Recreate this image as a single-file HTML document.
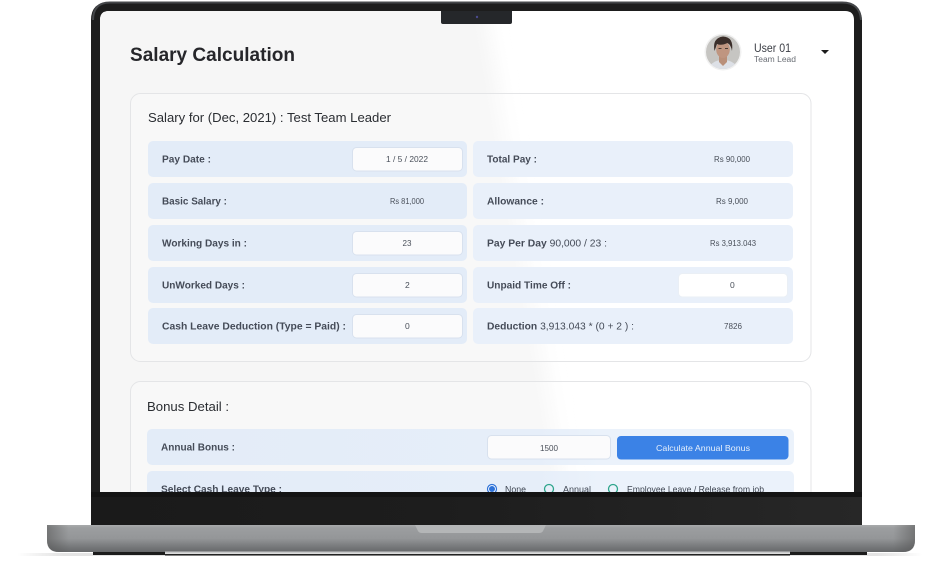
<!DOCTYPE html>
<html><head><meta charset="utf-8"><title>Salary Calculation</title>
<style>
html,body{margin:0;padding:0;background:#fff;width:940px;height:564px;overflow:hidden}
svg{display:block}
text{font-family:"Liberation Sans",sans-serif}
.l{font-size:10.5px;font-weight:700;fill:#454c58}
.n{font-weight:400}
.v{font-size:8.5px;fill:#4a505a}
.r{font-size:9px;fill:#3f4652}
</style></head>
<body>
<svg width="940" height="564" viewBox="0 0 940 564" xmlns="http://www.w3.org/2000/svg">
<defs>
<clipPath id="sc"><path d="M100 20Q100 11 109 11H845Q854 11 854 20V492H100Z"/></clipPath>
<clipPath id="av"><circle cx="723" cy="52" r="17"/></clipPath>
<linearGradient id="base" x1="0" y1="0" x2="0" y2="1">
<stop offset="0" stop-color="#a9abac"/><stop offset=".1" stop-color="#9c9ea0"/><stop offset=".5" stop-color="#949698"/><stop offset=".8" stop-color="#77797b"/><stop offset="1" stop-color="#66686a"/>
</linearGradient>
<linearGradient id="baseh" x1="0" y1="0" x2="1" y2="0">
<stop offset="0" stop-color="#555" stop-opacity=".55"/><stop offset=".025" stop-color="#555" stop-opacity="0"/><stop offset=".975" stop-color="#555" stop-opacity="0"/><stop offset="1" stop-color="#555" stop-opacity=".55"/>
</linearGradient>
<linearGradient id="sh" x1="0" y1="0" x2="1" y2="0">
<stop offset="0" stop-color="#ddd" stop-opacity="0"/><stop offset=".05" stop-color="#e4e4e4"/><stop offset=".95" stop-color="#e4e4e4"/><stop offset="1" stop-color="#ddd" stop-opacity="0"/>
</linearGradient>
<linearGradient id="bez" x1="0" y1="0" x2="1" y2="0">
<stop offset="0" stop-color="#1a1a1a"/><stop offset=".45" stop-color="#1d1d1d"/><stop offset="1" stop-color="#272727"/>
</linearGradient>
<linearGradient id="rowg" gradientUnits="userSpaceOnUse" x1="147" y1="0" x2="794" y2="0">
<stop offset="0" stop-color="#e3ecf8"/><stop offset=".6" stop-color="#e6eef9"/><stop offset=".7" stop-color="#ebf2fb"/><stop offset="1" stop-color="#ebf2fb"/>
</linearGradient>
<filter id="soft" x="-2%" y="-2%" width="104%" height="104%"><feGaussianBlur stdDeviation="0.35"/></filter>
<filter id="gl" x="-10%" y="-10%" width="120%" height="120%"><feGaussianBlur stdDeviation="9"/></filter>
</defs>

<rect x="18" y="553" width="904" height="3" fill="url(#sh)"/>
<!-- bezel -->
<path d="M91 522V20Q91 2 110 2H842Q861 2 862 20V522Q862 525 858 525H95Q91 525 91 522Z" fill="#1d1d1d"/>
<path d="M93 20Q93 2.500 110 2.500H842Q860 2.500 861 20" fill="none" stroke="#45474a" stroke-width="2"/>
<rect x="91" y="497" width="771" height="28" fill="url(#bez)"/>
<rect x="91" y="492" width="771" height="5" fill="#141414"/>

<!-- screen -->
<path d="M100 20Q100 11 109 11H845Q854 11 854 20V492H100Z" fill="#fff"/>
<g clip-path="url(#sc)">
<path d="M70 -10H482L570 510H70Z" fill="#f6f6f6" filter="url(#gl)"/>
<g filter="url(#soft)">
<text x="130" y="61" font-size="19" font-weight="700" fill="#26282c" textLength="165" lengthAdjust="spacingAndGlyphs">Salary Calculation</text>

<!-- avatar -->
<circle cx="723" cy="52" r="18.500" fill="#f1f1f1"/>
<g clip-path="url(#av)">
<rect x="706" y="35" width="34" height="34" fill="#c6c5c2"/>
<path d="M708 70Q711 62 718 60.500H728Q735 62 739 70Z" fill="#dde0e6"/>
<path d="M719 55H727V62L723 66L719 62Z" fill="#b98f79"/>
<ellipse cx="723" cy="49.500" rx="6.800" ry="8.500" fill="#bf9580"/>
<path d="M714.500 51Q712 38 723 36.500Q734 37 732 51Q731 45 727.500 43Q721 46 717 44Q716 47 714.500 51Z" fill="#3a2e29"/>
<rect x="718.500" y="48" width="3" height="1" fill="#4a3a33"/>
<rect x="725" y="48" width="3" height="1" fill="#4a3a33"/>
</g>
<text x="754" y="52" font-size="11.500" fill="#3a3d44" textLength="37" lengthAdjust="spacingAndGlyphs">User 01</text>
<text x="754" y="62" font-size="8" fill="#6a6e75" textLength="42" lengthAdjust="spacingAndGlyphs">Team Lead</text>
<path d="M821 50H829L825 54Z" fill="#1b1b1b"/>

<!-- card 1 -->
<rect x="130.500" y="93.500" width="680.500" height="268" rx="10" fill="#fff" fill-opacity=".25" stroke="#e4e5e7"/>
<text x="148" y="122" font-size="13" fill="#2b2d32" textLength="243" lengthAdjust="spacingAndGlyphs">Salary for (Dec, 2021) : Test Team Leader</text>

<g fill="#e3ecf8">
<rect x="148" y="141" width="319" height="36" rx="5"/>
<rect x="148" y="183" width="319" height="36" rx="5"/>
<rect x="148" y="225" width="319" height="36" rx="5"/>
<rect x="148" y="267" width="319" height="36" rx="5"/>
<rect x="148" y="308" width="319" height="36" rx="5"/>
</g>
<g fill="#e9f0fa">
<rect x="473" y="141" width="320" height="36" rx="5"/>
<rect x="473" y="183" width="320" height="36" rx="5"/>
<rect x="473" y="225" width="320" height="36" rx="5"/>
<rect x="473" y="267" width="320" height="36" rx="5"/>
<rect x="473" y="308" width="320" height="36" rx="5"/>
</g>

<g fill="#fbfbfc" stroke="#d8e1ee">
<rect x="352.500" y="147.500" width="110" height="23.500" rx="4"/>
<rect x="352.500" y="231.500" width="110" height="23.500" rx="4"/>
<rect x="352.500" y="273.500" width="110" height="23.500" rx="4"/>
<rect x="352.500" y="314.500" width="110" height="23.500" rx="4"/>
<rect x="678.500" y="273.500" width="109" height="23.500" rx="4" fill="#fff" stroke="#eaeff5"/>
</g>

<text class="l" x="162" y="162.500" textLength="49" lengthAdjust="spacingAndGlyphs">Pay Date :</text>
<text class="l" x="162" y="204.500" textLength="65" lengthAdjust="spacingAndGlyphs">Basic Salary :</text>
<text class="l" x="162" y="246.500" textLength="85" lengthAdjust="spacingAndGlyphs">Working Days in :</text>
<text class="l" x="162" y="288.500" textLength="83" lengthAdjust="spacingAndGlyphs">UnWorked Days :</text>
<text class="l" x="162" y="329.500" textLength="184" lengthAdjust="spacingAndGlyphs">Cash Leave Deduction (Type = Paid) :</text>
<text class="l" x="487" y="162.500" textLength="50" lengthAdjust="spacingAndGlyphs">Total Pay :</text>
<text class="l" x="487" y="204.500" textLength="57" lengthAdjust="spacingAndGlyphs">Allowance :</text>
<text class="l" x="487" y="246.500" textLength="120" lengthAdjust="spacingAndGlyphs">Pay Per Day <tspan class="n">90,000 / 23 :</tspan></text>
<text class="l" x="487" y="288.500" textLength="84" lengthAdjust="spacingAndGlyphs">Unpaid Time Off :</text>
<text class="l" x="487" y="329.500" textLength="147" lengthAdjust="spacingAndGlyphs">Deduction <tspan class="n">3,913.043 * (0 + 2 ) :</tspan></text>

<text class="v" x="386" y="162" textLength="42" lengthAdjust="spacingAndGlyphs">1 / 5 / 2022</text>
<text class="v" x="390" y="204" textLength="34" lengthAdjust="spacingAndGlyphs">Rs 81,000</text>
<text class="v" x="402.500" y="246" textLength="9" lengthAdjust="spacingAndGlyphs">23</text>
<text class="v" x="405" y="288">2</text>
<text class="v" x="405" y="329">0</text>
<text class="v" x="714" y="162" textLength="36" lengthAdjust="spacingAndGlyphs">Rs 90,000</text>
<text class="v" x="716" y="204" textLength="32" lengthAdjust="spacingAndGlyphs">Rs 9,000</text>
<text class="v" x="710" y="246" textLength="46" lengthAdjust="spacingAndGlyphs">Rs 3,913.043</text>
<text class="v" x="730" y="288">0</text>
<text class="v" x="724" y="329" textLength="18" lengthAdjust="spacingAndGlyphs">7826</text>

<!-- card 2 -->
<rect x="130.500" y="381.500" width="680.500" height="150" rx="10" fill="#fff" fill-opacity=".25" stroke="#e4e5e7"/>
<text x="147" y="411" font-size="13" fill="#2b2d32" textLength="82" lengthAdjust="spacingAndGlyphs">Bonus Detail :</text>
<rect x="147" y="429" width="647" height="36" rx="5" fill="url(#rowg)"/>
<rect x="147" y="471" width="647" height="36" rx="5" fill="url(#rowg)"/>
<text class="l" x="161" y="450.500" textLength="74" lengthAdjust="spacingAndGlyphs">Annual Bonus :</text>
<rect x="487.500" y="435.500" width="123" height="23.500" rx="4" fill="#fbfbfc" stroke="#d8e1ee"/>
<text class="v" x="540" y="451" textLength="18" lengthAdjust="spacingAndGlyphs">1500</text>
<rect x="617" y="436" width="171.500" height="23.500" rx="4" fill="#3b82e6"/>
<text x="656" y="451" font-size="8.500" fill="#e6effb" textLength="94" lengthAdjust="spacingAndGlyphs">Calculate Annual Bonus</text>
<text class="l" x="161" y="492.500" textLength="121" lengthAdjust="spacingAndGlyphs">Select Cash Leave Type :</text>
<circle cx="492" cy="489" r="4.500" fill="#fff" stroke="#2f72d8" stroke-width="1.200"/>
<circle cx="492" cy="489" r="3" fill="#2f72d8"/>
<circle cx="549" cy="489" r="4.500" fill="none" stroke="#2fa58c" stroke-width="1.300"/>
<circle cx="613" cy="489" r="4.500" fill="none" stroke="#2fa58c" stroke-width="1.300"/>
<text class="r" x="505" y="492.500" textLength="21" lengthAdjust="spacingAndGlyphs">None</text>
<text class="r" x="563" y="492.500" textLength="28" lengthAdjust="spacingAndGlyphs">Annual</text>
<text class="r" x="627" y="492.500" textLength="137" lengthAdjust="spacingAndGlyphs">Employee Leave / Release from job</text>
</g>
</g>

<!-- notch -->
<path d="M441 11H512V22Q512 24 510 24H443Q441 24 441 22Z" fill="#25272a"/>
<circle cx="477" cy="17" r="1.200" fill="#4a4a8c"/>

<!-- base -->
<rect x="93" y="551" width="72" height="4" fill="#1c1c1c"/>
<rect x="790" y="551" width="77" height="4" fill="#1c1c1c"/>
<rect x="165" y="554" width="625" height="1.500" fill="#222"/>
<path d="M47 525H915V540Q915 552 903 552H59Q47 552 47 540Z" fill="url(#base)"/>
<path d="M47 525H915V540Q915 552 903 552H59Q47 552 47 540Z" fill="url(#baseh)"/>
<rect x="165" y="551.500" width="625" height="1.800" fill="#c9cacb"/>
<path d="M415 525H546L543 531Q542 533 539 533H422Q419 533 418 531Z" fill="#b4b6b7"/>
</svg>
</body></html>
